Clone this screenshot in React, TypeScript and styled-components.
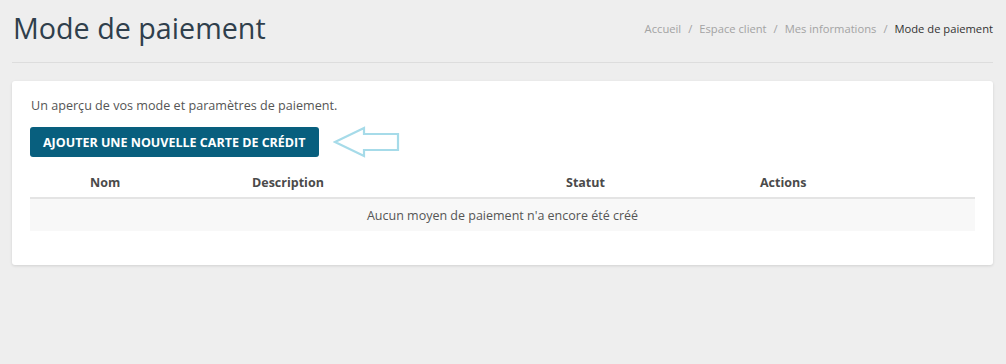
import styled, { createGlobalStyle } from "styled-components";

const GlobalStyle = createGlobalStyle`
  html, body {
    margin: 0;
    padding: 0;
    background: #eeeeee;
    font-family: "Open Sans", "Liberation Sans", sans-serif;
  }
`;

const Page = styled.div`
  padding: 0 13px 0 12px;
  min-height: 364px;
  box-sizing: border-box;
`;

const Header = styled.div`
  display: flex;
  justify-content: space-between;
  align-items: center;
  padding: 9px 0 15px 1px;
  border-bottom: 1px solid #dddddd;
`;

const Title = styled.h1`
  margin: 0;
  font-size: 28.7px;
  font-weight: 400;
  color: #2f3f4c;
  line-height: 38px;
`;

const Breadcrumb = styled.nav`
  display: flex;
  gap: 7px;
  font-size: 11.2px;
  color: #a3a3a3;
  margin-top: 1px;
`;

const Crumb = styled.span<{ $active?: boolean }>`
  color: ${(p) => (p.$active ? "#333333" : "#a3a3a3")};
`;

const Card = styled.section`
  margin-top: 18px;
  background: #ffffff;
  border-radius: 3px;
  box-shadow: 0 1px 3px rgba(0, 0, 0, 0.12);
  padding: 16px 18px 34px 18px;
`;

const Intro = styled.p`
  margin: 0 0 11px 1px;
  font-size: 12.6px;
  color: #555555;
  line-height: 18px;
`;

const ActionRow = styled.div`
  display: flex;
  align-items: center;
  gap: 14px;
`;

const Button = styled.button`
  height: 30px;
  padding: 0 13px;
  border: none;
  border-radius: 3px;
  background: #085f7e;
  color: #ffffff;
  font-family: "Open Sans", "Liberation Sans", sans-serif;
  font-size: 12.5px;
  font-weight: 700;
  text-transform: uppercase;
  cursor: pointer;
`;

const Table = styled.div`
  margin-top: 9px;
`;

const HeadRow = styled.div`
  display: grid;
  grid-template-columns: 222px 314px 194px 1fr;
  height: 30px;
  align-items: center;
  border-bottom: 2px solid #e4e4e4;
`;

const HeadCell = styled.div<{ $indent?: number }>`
  padding-left: ${(p) => p.$indent ?? 0}px;
  font-size: 12.5px;
  font-weight: 700;
  color: #4a4a4a;
`;

const EmptyRow = styled.div`
  height: 32px;
  display: flex;
  align-items: center;
  justify-content: center;
  background: #f8f8f8;
  font-size: 12.5px;
  color: #555555;
`;

const Arrow = () => (
  <svg width="68" height="32" viewBox="0 0 68 32">
    <path
      d="M2 16 L31 2 L31 8 L65 8 L65 24 L31 24 L31 30 Z"
      fill="none"
      stroke="#a6dbe9"
      strokeWidth="2.2"
      strokeLinejoin="miter"
    />
  </svg>
);

export default function App() {
  return (
    <>
      <GlobalStyle />
      <Page>
        <Header>
          <Title>Mode de paiement</Title>
          <Breadcrumb>
            <Crumb>Accueil</Crumb>
            <span>/</span>
            <Crumb>Espace client</Crumb>
            <span>/</span>
            <Crumb>Mes informations</Crumb>
            <span>/</span>
            <Crumb $active>Mode de paiement</Crumb>
          </Breadcrumb>
        </Header>
        <Card>
          <Intro>Un aperçu de vos mode et paramètres de paiement.</Intro>
          <ActionRow>
            <Button>Ajouter une nouvelle carte de crédit</Button>
            <Arrow />
          </ActionRow>
          <Table>
            <HeadRow>
              <HeadCell $indent={60}>Nom</HeadCell>
              <HeadCell>Description</HeadCell>
              <HeadCell>Statut</HeadCell>
              <HeadCell>Actions</HeadCell>
            </HeadRow>
            <EmptyRow>Aucun moyen de paiement n'a encore été créé</EmptyRow>
          </Table>
        </Card>
      </Page>
    </>
  );
}
